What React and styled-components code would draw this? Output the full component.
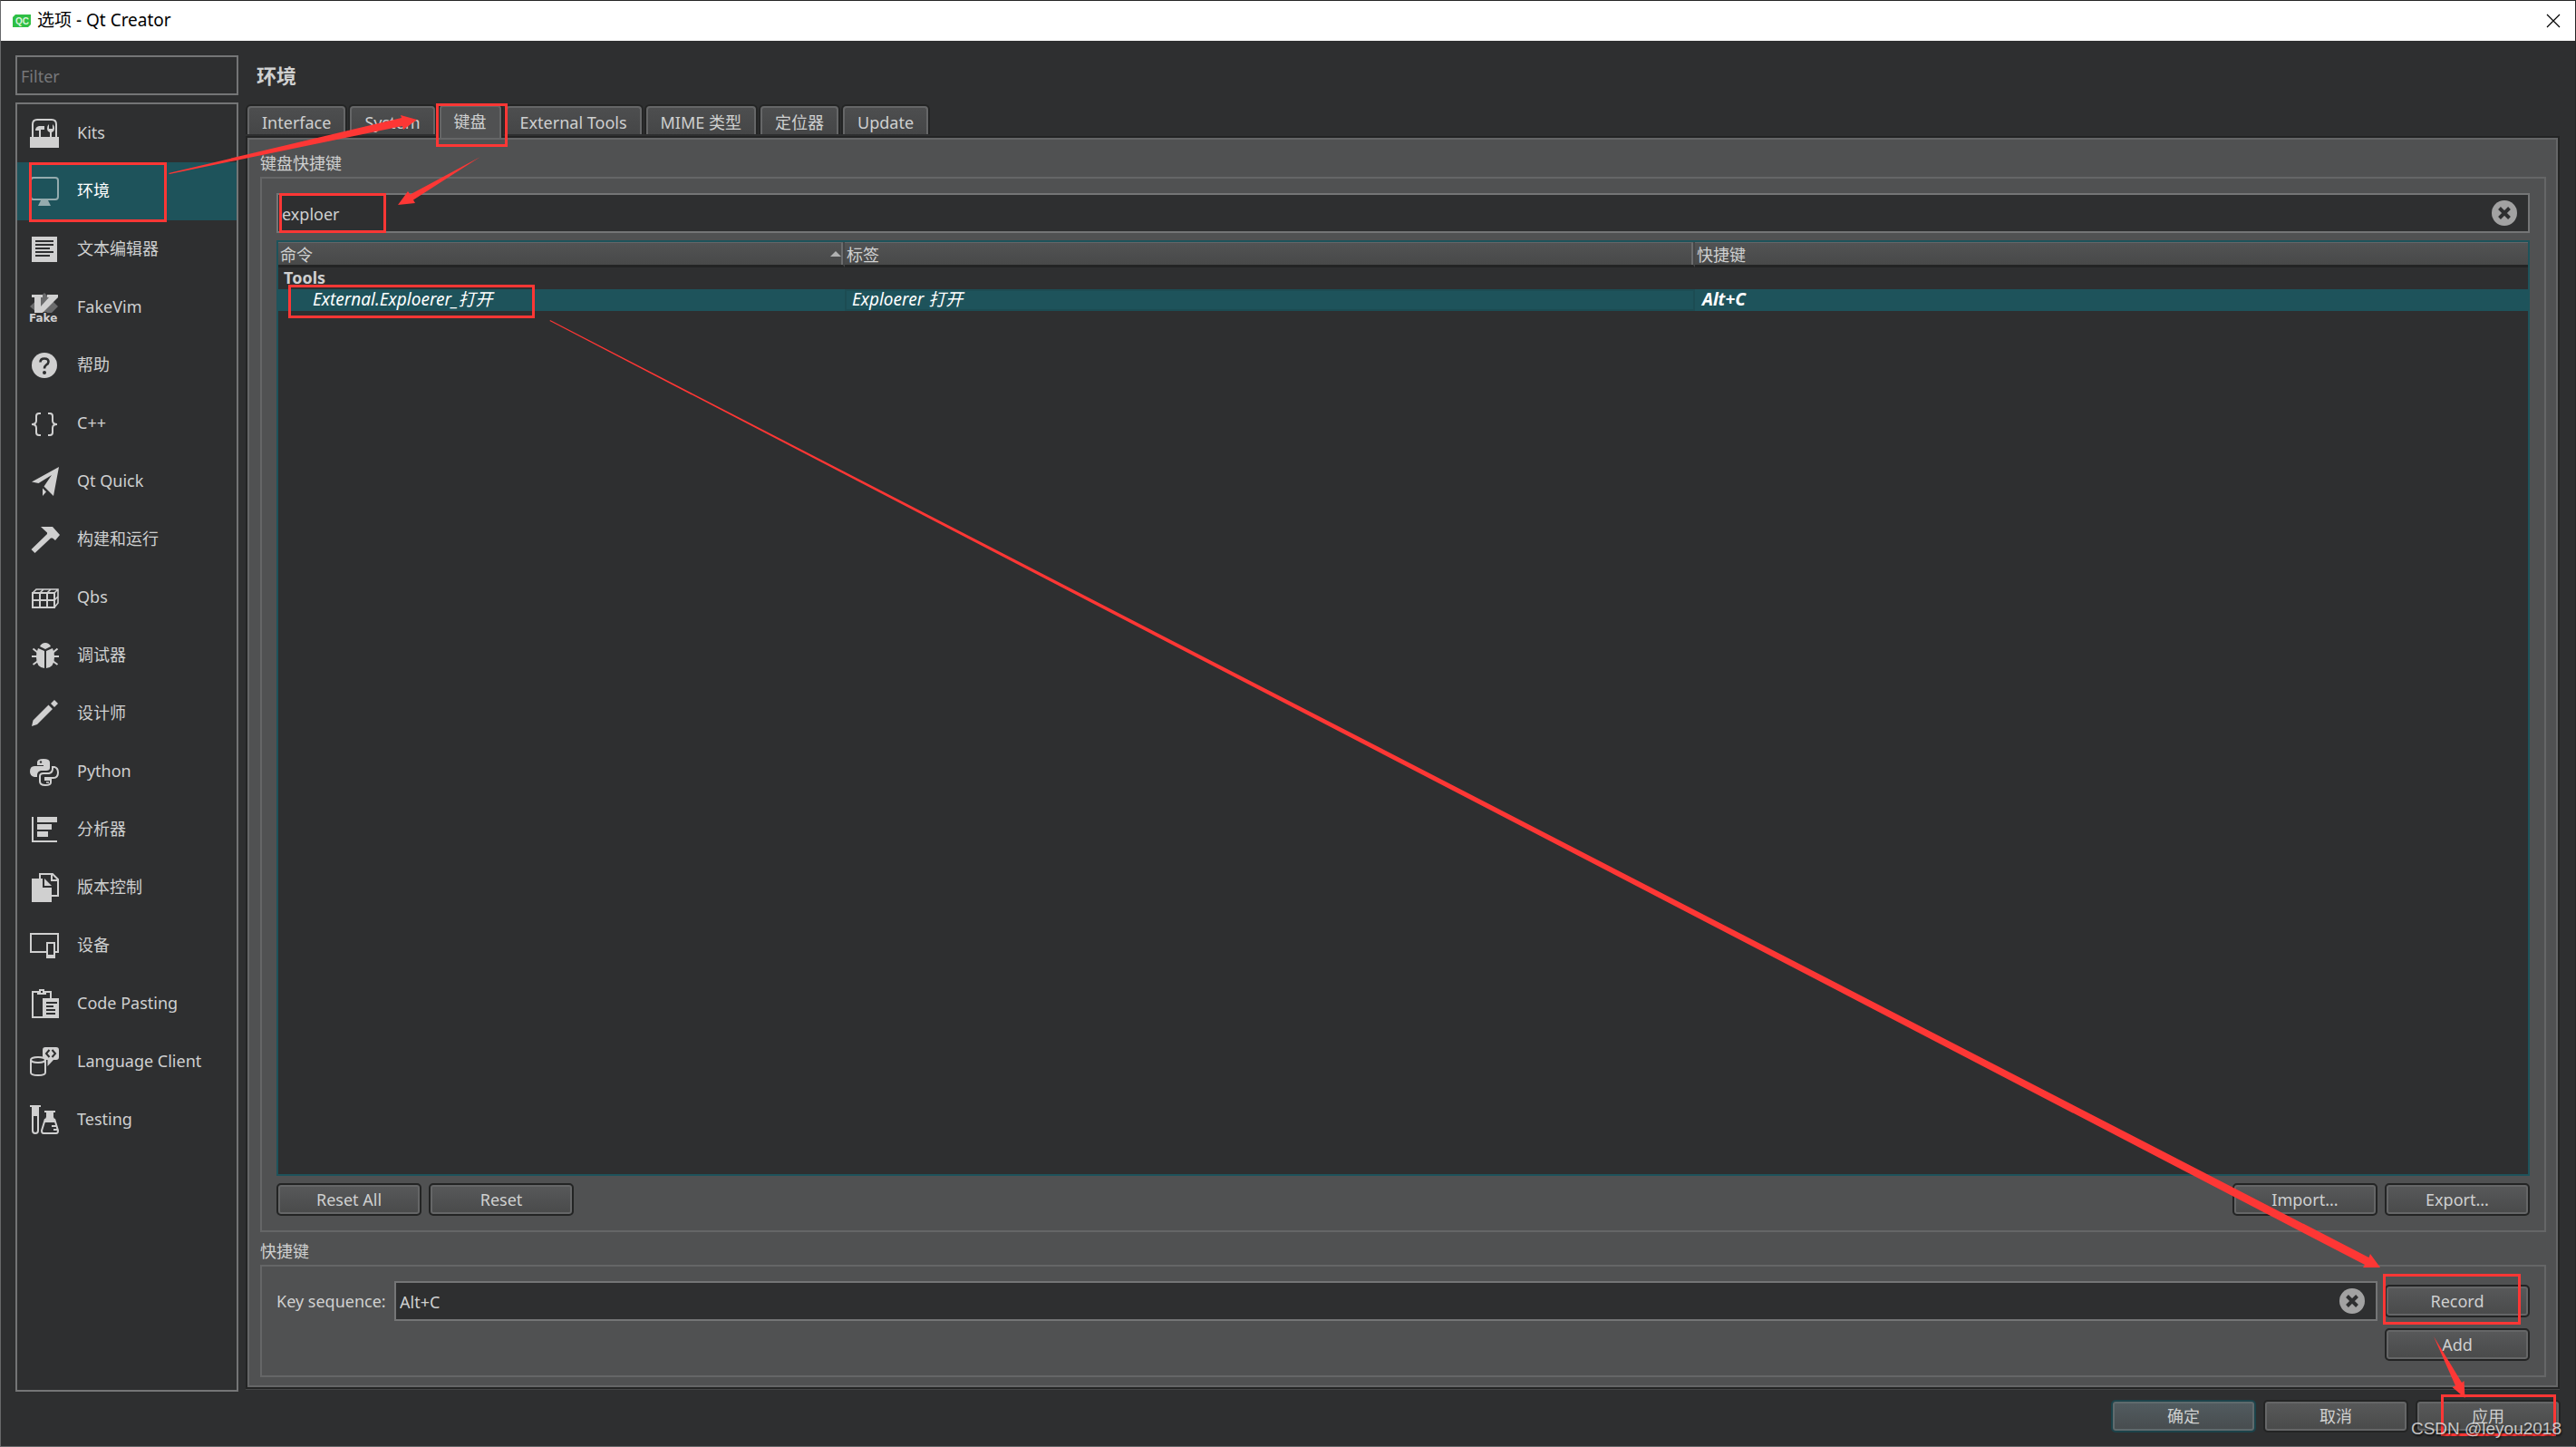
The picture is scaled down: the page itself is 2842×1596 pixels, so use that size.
import React, { useState } from 'react';
import styled, { createGlobalStyle, css } from 'styled-components';

const GlobalStyle = createGlobalStyle`
  * {
    box-sizing: border-box;
  }

  body {
    margin: 0;
    background: #2e2f30;
  }

  body, input, button, table {
    font-family: 'Noto Sans', 'Noto Sans CJK SC', sans-serif;
    font-size: 18px;
    line-height: 24px;
    color: #cfd0d0;
  }
`;

const Window = styled.div`
  position: relative;
  display: flex;
  flex-direction: column;
  min-height: 100vh;
  background: #2e2f30;
  border: 1px solid #67686a;
  border-top-color: #262626;
  border-right-color: #262626;
`;

const TitleBar = styled.header`
  display: flex;
  align-items: center;
  gap: 7px;
  height: 44px;
  padding: 0 16px 0 13px;
  background: #ffffff;
  color: #000000;
`;

const Title = styled.h1`
  flex: 1;
  margin: 0;
  padding-bottom: 2px;
  font-size: 19px;
  font-weight: 400;
`;

const CloseButton = styled.button`
  display: flex;
  padding: 0;
  border: none;
  background: none;
`;

const Body = styled.div`
  flex: 1;
  display: grid;
  grid-template-columns: 246px 1fr;
  gap: 8px;
  padding: 16px 17px 0 16px;
`;

const Sidebar = styled.nav`
  display: flex;
  flex-direction: column;
  gap: 8px;
`;

const inputBox = css`
  height: 44px;
  border: 2px solid #747576;
  background: #2e2f30;
`;

const Filter = styled.input`
  ${inputBox}
  width: 100%;
  padding: 2px 4px 0;
  outline: none;

  &::placeholder {
    color: #77787a;
    opacity: 1;
  }
`;

const Categories = styled.ul`
  flex: 1;
  margin: 0;
  padding: 0;
  list-style: none;
  border: 2px solid #747576;
`;

const Category = styled.button`
  display: flex;
  align-items: center;
  gap: 20px;
  width: 100%;
  height: 64px;
  padding: 0 14px;
  border: none;
  text-align: left;
  background: ${(p) => (p.$active ? '#1e535b' : 'transparent')};
  color: ${(p) => (p.$active ? '#ffffff' : '#cfd0d0')};

  svg {
    flex: none;
    overflow: visible;
    color: ${(p) => (p.$active ? '#94abae' : '#d0d0d0')};
  }
`;

const CategoryLabel = styled.span`
  padding-bottom: 2px;
`;

const Main = styled.main`
  display: flex;
  flex-direction: column;
  padding-bottom: 3px;
`;

const Heading = styled.h2`
  height: 44px;
  margin: 0;
  padding-left: 12px;
  font-size: 22px;
  line-height: 44px;
  font-weight: 700;
`;

const Tabs = styled.div`
  display: flex;
  align-items: flex-end;
  gap: 5px;
  height: 45px;
  padding-left: 2px;
`;

const Tab = styled.button`
  height: ${(p) => (p.$active ? 36 : 31)}px;
  margin-bottom: ${(p) => (p.$active ? -2 : 2)}px;
  padding: ${(p) => (p.$active ? '0 14px 2px' : '2px 14px 0')};
  border: 2px solid #656667;
  border-bottom: none;
  border-radius: 4px 4px 0 0;
  background: ${(p) => (p.$active ? '#505152' : 'linear-gradient(#4d4e4f, #454647)')};
  box-shadow: 0 0 0 2px #232424;
  clip-path: inset(-2px -2px 0 -2px);
  z-index: ${(p) => (p.$active ? 1 : 0)};
`;

const Panel = styled.div`
  flex: 1;
  display: flex;
  flex-direction: column;
  padding: 16px 13px 11px 14px;
  border: 2px solid #232424;
  background: #505152;
  box-shadow: inset 0 0 0 2px #656667, 0 1px 0 #454647;
`;

const GroupTitle = styled.h3`
  margin: 0 0 3px;
  font-size: 18px;
  font-weight: 400;
`;

const Group = styled.section`
  display: flex;
  flex-direction: column;
  gap: 8px;
  flex: ${(p) => (p.$grow ? 1 : 'none')};
  margin-bottom: ${(p) => (p.$grow ? 9 : 0)}px;
  padding: 16px;
  border: 2px solid #656667;
`;

const Field = styled.div`
  ${inputBox}
  flex: ${(p) => (p.$inline ? 1 : 'none')};
  display: flex;
  align-items: center;
  padding: 0 12px 0 4px;
`;

const FieldInput = styled.input`
  flex: 1;
  min-width: 0;
  padding: 2px 0 0;
  border: none;
  outline: none;
  background: none;
`;

const TableFrame = styled.div`
  flex: 1;
  border: 2px solid #1e535b;
  background: #2e2f30;
`;

const CommandTable = styled.table`
  width: 100%;
  table-layout: fixed;
  border-collapse: separate;
  border-spacing: 0;
  text-align: left;
`;

const HeaderCell = styled.th`
  position: relative;
  width: ${(p) => p.$width || 'auto'};
  height: 28px;
  padding: 4px 2px 1px;
  line-height: 20px;
  font-weight: 400;
  background: linear-gradient(#525354, #484949);
  border-bottom: 3px solid #232424;
  box-shadow: inset 0 1px 0 #656667;

  &:not(:last-child) {
    border-right: 2px solid #454647;
    box-shadow: inset 0 1px 0 #656667, inset -2px 0 0 #6b6c6d;
  }
`;

const SortArrow = styled.span`
  position: absolute;
  right: 2px;
  top: 10px;
  border: 6px solid transparent;
  border-top: none;
  border-bottom-color: #b0b1b1;
`;

const Row = styled.tr`
  background: ${(p) => (p.$selected ? '#1e535b' : 'transparent')};
  color: ${(p) => (p.$selected ? '#ffffff' : '#cfd0d0')};
`;

const Cell = styled.td`
  height: 24px;
  padding: 0 0 2px ${(p) => p.$indent || 8}px;
  line-height: 22px;
  font-size: ${(p) => (p.$italic ? 19 : 18)}px;
  font-style: ${(p) => (p.$italic ? 'italic' : 'normal')};
  font-weight: ${(p) => (p.$bold ? 700 : 400)};
  box-shadow: ${(p) => (p.$current ? 'inset 0 0 0 2px #1c4c53' : 'none')};
`;

const ButtonRow = styled.div`
  display: flex;
  gap: 8px;
  justify-content: ${(p) => p.$align || 'flex-start'};
`;

const Spacer = styled.div`
  flex: 1;
`;

const Button = styled.button`
  width: 160px;
  height: 36px;
  padding: 0;
  border: 2px solid ${(p) => (p.$default ? '#1c434a' : '#232424')};
  border-radius: 5px;
  background: ${(p) => (p.$default ? 'linear-gradient(#525c60, #474c4e)' : 'linear-gradient(#58595a, #494a4a)')};
  box-shadow: inset 0 0 0 2px ${(p) => (p.$default ? '#5f6a6d' : '#656667')};
`;

const ClearButton = styled.button`
  display: flex;
  padding: 0;
  border: none;
  background: none;
`;

const KeyRow = styled.div`
  display: flex;
  align-items: center;
  gap: 8px;
`;

const KeyLabel = styled.label`
  width: 122px;
  white-space: nowrap;
`;

const Footer = styled.footer`
  display: flex;
  justify-content: flex-end;
  gap: 8px;
  padding: 9px 16px 15px;
`;

const Marks = styled.svg`
  position: absolute;
  left: -1px;
  top: -1px;
  pointer-events: none;
  z-index: 2;
`;

const Watermark = styled.div`
  position: absolute;
  right: 15px;
  bottom: 5px;
  z-index: 3;
  font-family: 'Liberation Sans', sans-serif;
  font-size: 19px;
  line-height: 28px;
  color: rgba(225, 225, 225, 0.85);
  text-shadow: 1px 2px 2px rgba(0, 0, 0, 0.6);
`;

const DARK = '#2e2f30';

const icons = {
  kits: (
    <>
      <path d="M3 20V6Q3 1 8 1H24Q29 1 29 6V20" fill="none" stroke="currentColor" strokeWidth="2" />
      <path d="M0 20H32V32H0Z" />
      <path d="M6 13Q6 9 10 8H16V12H12V20H10V13Z" />
      <path d="M22 20V15Q19 14 19 10.500Q19 7.500 21 6V11H25V6Q27 7.500 27 10.500Q27 14 24 15V20Z" />
    </>
  ),
  environment: (
    <>
      <rect x="1" y="1" width="30" height="24" rx="3" fill="none" stroke="currentColor" strokeWidth="2" />
      <path d="M12 26H20L23 32H9Z" />
    </>
  ),
  text: (
    <>
      <path d="M2 2H30V30H2Z" />
      <path d="M6 7H26M6 11H26M6 15H22M6 19H26M6 23H22" stroke={DARK} strokeWidth="2" />
    </>
  ),
  fakevim: (
    <>
      <path d="M16 0L31 15L24 22H8L0 15Z" fill="#6a6b6c" />
      <path d="M2 2H14V5H12V15L21 5H19V2H31V5L14 22H5V5H2Z" />
      <text x="-1" y="32" fontFamily="DejaVu Sans" fontSize="12" fontWeight="700" stroke={DARK} strokeWidth="2" paintOrder="stroke">Fake</text>
    </>
  ),
  help: (
    <>
      <circle cx="16" cy="16" r="14" />
      <path d="M11.500 12.500Q11.500 8.500 16 8.500Q20.500 8.500 20.500 12Q20.500 14 18 15.500Q16 17 16 19.500" fill="none" stroke={DARK} strokeWidth="2.600" />
      <circle cx="16" cy="24" r="2" fill={DARK} />
    </>
  ),
  cpp: (
    <path
      d="M12 5H10Q7 5 7 8V13Q7 17 2 17Q7 17 7 21V26Q7 29 10 29H12M20 5H22Q25 5 25 8V13Q25 17 30 17Q25 17 25 21V26Q25 29 22 29H20"
      fill="none"
      stroke="currentColor"
      strokeWidth="2"
    />
  ),
  quick: <path d="M2 16.500L32 0L26 32L15.500 21.500L24 9L9.500 18ZM14 23.500L18 27.500L14 32Z" />,
  build: <path d="M12 2H25L33 11L28 17L25 14.500H23L5.500 31L1.500 27L19 10V8.500Z" />,
  qbs: (
    <>
      <path d="M3 11H27V27H3ZM11 11V27M19 11V27M3 19H27" fill="none" stroke="currentColor" strokeWidth="2" />
      <path d="M3 11L7 7H31V22L27 27M27 11L31 7M11 11L15 7M19 11L23 7M27 19L31 15" fill="none" stroke="currentColor" strokeWidth="1.600" />
    </>
  ),
  debugger: (
    <>
      <path d="M11 6Q13 2 17 2Q21 2 23 6L17 9Z" />
      <path d="M9 8L16 11V30Q7 29 7 18Q7 12 9 8ZM25 8L18 11V30Q27 29 27 18Q27 12 25 8Z" />
      <path d="M2 17H8M26 17H32M3.500 8.500L9 13M30.500 8.500L25 13M3.500 26L9 22M30.500 26L25 22" stroke="currentColor" strokeWidth="2" />
    </>
  ),
  designer: <path d="M2 30L3.500 23.500L20.500 6.500L25 11L8 28ZM27 1L31 5L27 9L23 5Z" />,
  python: (
    <>
      <path d="M8 9V6Q8 2 15 2Q22 2 22 6V12Q22 15 18 15H12Q8 16 8 20V22H5Q0 21 0 16Q0 10 5 10H15V9Z" />
      <circle cx="12" cy="5.500" r="1.200" fill={DARK} />
      <path
        d="M25 11H27Q31 12 31 17Q31 23 26 23H17V25H23V28Q23 31 17 31Q11 31 11 27V21Q11 18 15 18H21Q25 17 25 13Z"
        fill="none"
        stroke="currentColor"
        strokeWidth="2"
      />
      <path d="M18 28H21" stroke="currentColor" strokeWidth="1.500" />
    </>
  ),
  analyzer: <path d="M2 2H4V28H30V30H2ZM8 2H30V8H8ZM8 10H24V16H8ZM8 18H20V24H8Z" />,
  vcs: (
    <>
      <path d="M11 6V1H25L31 7V25H24M24 1V8H31" fill="none" stroke="currentColor" strokeWidth="2" />
      <path d="M2 6H14V16H24V32H2ZM16 6L24 14H16Z" />
    </>
  ),
  devices: (
    <>
      <path d="M18 23H1V3H31V23H28" fill="none" stroke="currentColor" strokeWidth="2" />
      <path d="M18 12H28V30H18ZM20 14V26H26V14Z" fillRule="evenodd" />
    </>
  ),
  paste: (
    <>
      <path d="M14 31H3V3H23V10" fill="none" stroke="currentColor" strokeWidth="2" />
      <path d="M8 6V2H10V0H16V2H18V6ZM14 10H32V32H14Z" />
      <path d="M12 3H14M18 15H30M18 19H26M18 23H28M18 27H28" stroke={DARK} strokeWidth="2" />
    </>
  ),
  language: (
    <>
      <path d="M1 14V28Q1 31 9 31Q17 31 17 28V14" fill="none" stroke="currentColor" strokeWidth="2" />
      <ellipse cx="9" cy="14" rx="8" ry="3" fill="none" stroke="currentColor" strokeWidth="2" />
      <path d="M17 0H29Q32 0 32 3V11Q32 14 29 14H26L19.500 21V14H18Q14 13 14 10V3Q14 0 17 0Z" />
      <path d="M21.500 3L18 7L21.500 11M24.500 3L28 7L24.500 11" fill="none" stroke={DARK} strokeWidth="2" />
    </>
  ),
  testing: (
    <>
      <path d="M0 0H12V2H10V12H2V2H0Z" />
      <path d="M3 12V28Q3 31 6 31Q9 31 9 28V12" fill="none" stroke="currentColor" strokeWidth="2" />
      <path d="M16 6H28V8H26V13L29 19H15L18 13V8H16Z" />
      <path d="M17 15L13 28Q13 31 15 31H29Q31 31 31 28L27 15M24 23H29M26 27H30" fill="none" stroke="currentColor" strokeWidth="2" />
    </>
  ),
};

const categories = [
  ['kits', 'Kits'],
  ['environment', '环境'],
  ['text', '文本编辑器'],
  ['fakevim', 'FakeVim'],
  ['help', '帮助'],
  ['cpp', 'C++'],
  ['quick', 'Qt Quick'],
  ['build', '构建和运行'],
  ['qbs', 'Qbs'],
  ['debugger', '调试器'],
  ['designer', '设计师'],
  ['python', 'Python'],
  ['analyzer', '分析器'],
  ['vcs', '版本控制'],
  ['devices', '设备'],
  ['paste', 'Code Pasting'],
  ['language', 'Language Client'],
  ['testing', 'Testing'],
];

const tabs = ['Interface', 'System', '键盘', 'External Tools', 'MIME 类型', '定位器', 'Update'];

const Icon = ({ name }) => (
  <svg width="32" height="32" viewBox="0 0 32 32" fill="currentColor" aria-hidden="true">
    {icons[name]}
  </svg>
);

const Clear = ({ onClick }) => (
  <ClearButton type="button" aria-label="Clear" onClick={onClick}>
    <svg width="28" height="28" viewBox="0 0 28 28">
      <circle cx="14" cy="14" r="14" fill="#a2a2a2" />
      <path d="M8.500 8.500L19.500 19.500M19.500 8.500L8.500 19.500" stroke={DARK} strokeWidth="4" />
    </svg>
  </ClearButton>
);

const Annotations = () => (
  <Marks width="2842" height="1596" viewBox="0 0 2842 1596" aria-hidden="true">
    <g fill="none" stroke="#fd3735" strokeWidth="3">
      <rect x="33.500" y="180.500" width="149" height="63" />
      <rect x="482.500" y="115.500" width="76" height="45" />
      <rect x="309.500" y="214.500" width="115" height="41" />
      <rect x="319.500" y="315.500" width="269" height="34" />
      <rect x="2630.500" y="1406.500" width="149" height="53" />
      <rect x="2694.500" y="1539.500" width="124" height="43" />
    </g>
    <g fill="#fd3735">
      <path d="M186 191L443 130L442 127L460 132L445 143L444 139L187 192Z" />
      <path d="M530 173L452.500 214.500L450 211L439 226L458 224L456 220.500Z" />
      <path d="M607 353L2613.500 1387L2615 1383L2626 1398H2607L2609 1395L606.500 354Z" />
      <path d="M2685 1474L2716 1525L2718.500 1523L2719.500 1542L2705.500 1530L2709 1528.500Z" />
    </g>
  </Marks>
);

const App = () => {
  const [filter, setFilter] = useState('');
  const [category, setCategory] = useState('environment');
  const [tab, setTab] = useState('键盘');
  const [search, setSearch] = useState('exploer');
  const [sequence, setSequence] = useState('Alt+C');

  return (
    <Window>
      <GlobalStyle />
      <TitleBar>
        <svg width="20" height="14" viewBox="0 0 20 14" aria-hidden="true">
          <path d="M3 0H20V11L17 14H0V3Z" fill="#2fbf45" />
          <text x="3" y="11" fontFamily="Liberation Sans" fontSize="10" fontWeight="700" fill="#d9f5dc">QC</text>
        </svg>
        <Title>选项 - Qt Creator</Title>
        <CloseButton type="button" aria-label="Close">
          <svg width="16" height="16" viewBox="0 0 16 16">
            <path d="M1 1L15 15M15 1L1 15" stroke="#000000" strokeWidth="1.200" />
          </svg>
        </CloseButton>
      </TitleBar>

      <Body>
        <Sidebar>
          <Filter
            aria-label="Filter"
            placeholder="Filter"
            value={filter}
            onChange={(e) => setFilter(e.target.value)}
          />
          <Categories>
            {categories.map(([id, label]) => (
              <li key={id}>
                <Category type="button" $active={id === category} onClick={() => setCategory(id)}>
                  <Icon name={id} />
                  <CategoryLabel>{label}</CategoryLabel>
                </Category>
              </li>
            ))}
          </Categories>
        </Sidebar>

        <Main>
          <Heading>环境</Heading>
          <Tabs role="tablist">
            {tabs.map((name) => (
              <Tab
                key={name}
                type="button"
                role="tab"
                aria-selected={name === tab}
                $active={name === tab}
                onClick={() => setTab(name)}
              >
                {name}
              </Tab>
            ))}
          </Tabs>
          <Panel>
            <GroupTitle>键盘快捷键</GroupTitle>
            <Group $grow>
              <Field>
                <FieldInput
                  aria-label="键盘快捷键"
                  value={search}
                  onChange={(e) => setSearch(e.target.value)}
                />
                <Clear onClick={() => setSearch('')} />
              </Field>
              <TableFrame>
                <CommandTable>
                  <thead>
                    <tr>
                      <HeaderCell $width="625px">
                        命令
                        <SortArrow />
                      </HeaderCell>
                      <HeaderCell $width="938px">标签</HeaderCell>
                      <HeaderCell>快捷键</HeaderCell>
                    </tr>
                  </thead>
                  <tbody>
                    <Row>
                      <Cell $indent={6} $bold colSpan={3}>Tools</Cell>
                    </Row>
                    <Row $selected>
                      <Cell $indent={38} $italic>External.Exploerer_打开</Cell>
                      <Cell $italic $current>Exploerer 打开</Cell>
                      <Cell $italic $bold>Alt+C</Cell>
                    </Row>
                  </tbody>
                </CommandTable>
              </TableFrame>
              <ButtonRow>
                <Button type="button">Reset All</Button>
                <Button type="button">Reset</Button>
                <Spacer />
                <Button type="button">Import...</Button>
                <Button type="button">Export...</Button>
              </ButtonRow>
            </Group>

            <GroupTitle>快捷键</GroupTitle>
            <Group>
              <KeyRow>
                <KeyLabel htmlFor="sequence">Key sequence:</KeyLabel>
                <Field $inline>
                  <FieldInput
                    id="sequence"
                    value={sequence}
                    onChange={(e) => setSequence(e.target.value)}
                  />
                  <Clear onClick={() => setSequence('')} />
                </Field>
                <Button type="button">Record</Button>
              </KeyRow>
              <ButtonRow $align="flex-end">
                <Button type="button">Add</Button>
              </ButtonRow>
            </Group>
          </Panel>
        </Main>
      </Body>

      <Footer>
        <Button type="button" $default>确定</Button>
        <Button type="button">取消</Button>
        <Button type="button">应用</Button>
      </Footer>

      <Annotations />
      <Watermark>CSDN @leyou2018</Watermark>
    </Window>
  );
};

export default App;
